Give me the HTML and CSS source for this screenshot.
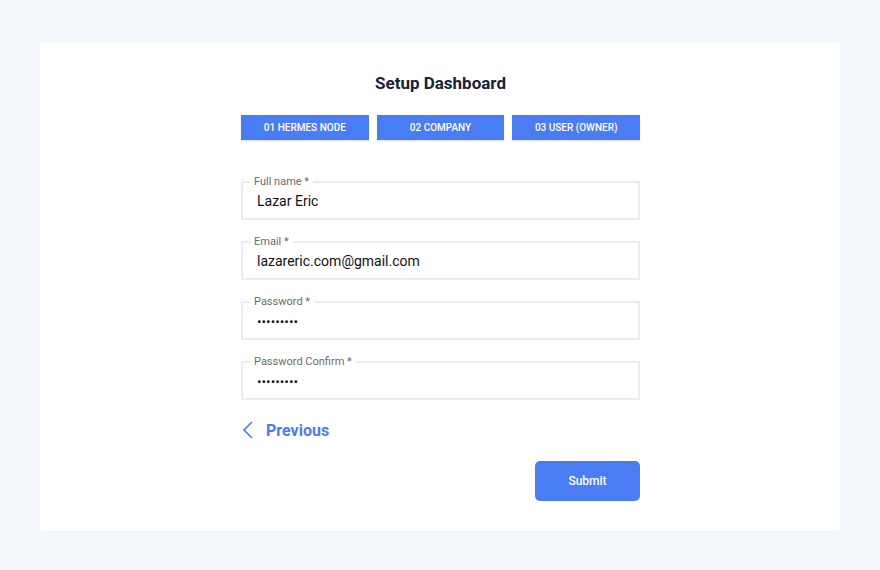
FILE: index.html
```html
<!DOCTYPE html>
<html>
<head>
<meta charset="utf-8">
<link rel="stylesheet" href="styles.css">
</head>
<body>
<div class="page">
  <div class="card">
    <div class="form">
      <h1 class="title">Setup Dashboard</h1>
      <div class="steps">
        <div class="step">01 HERMES NODE</div>
        <div class="step">02 COMPANY</div>
        <div class="step">03 USER (OWNER)</div>
      </div>
      <fieldset class="field">
        <legend>Full name *</legend>
        <input class="value" type="text" value="Lazar Eric">
      </fieldset>
      <fieldset class="field">
        <legend>Email *</legend>
        <input class="value" type="text" value="lazareric.com@gmail.com">
      </fieldset>
      <fieldset class="field">
        <legend>Password *</legend>
        <input class="value" type="password" value="123456789">
      </fieldset>
      <fieldset class="field">
        <legend>Password Confirm *</legend>
        <input class="value" type="password" value="123456789">
      </fieldset>
      <a class="prev" href="#">
        <svg width="12" height="18" viewBox="0 0 12 18"><polyline points="10,1 2,9 10,17" fill="none" stroke="#4a7cf3" stroke-width="1.6"/></svg>
        <span>Previous</span>
      </a>
      <div class="actions">
        <button class="submit">Submit</button>
      </div>
    </div>
  </div>
</div>
</body>
</html>
```
FILE: styles.css
```css
* { box-sizing: border-box; }
html, body { margin: 0; padding: 0; }
body {
  background: #f3f6fb;
  font-family: Roboto, "Liberation Sans", sans-serif;
  width: 880px;
  height: 570px;
  overflow: hidden;
}
.page { padding: 43px 40px 0; }
.card {
  background: #fff;
  height: 488px;
  border-radius: 2px;
  display: flex;
  justify-content: center;
}
.form {
  width: 399px;
  padding-top: 30px;
  margin-left: 1px;
}
.title {
  margin: 0;
  text-align: center;
  font-size: 17px;
  line-height: 20px;
  font-weight: 700;
  color: #17223a;
}
.steps {
  display: flex;
  gap: 8px;
  margin-top: 22px;
  margin-bottom: 35px;
}
.step {
  flex: 1;
  height: 25px;
  background: #4a7cf3;
  color: #fff;
  font-size: 10px;
  font-weight: 500;
  display: flex;
  align-items: center;
  justify-content: center;
  box-shadow: 0 1px 1px rgba(0,0,0,0.12);
}
.field {
  margin: 0 0 15px;
  border: 2px solid #ececec;
  padding: 3px 14px 7px;
  height: 45px;
}
.field legend {
  font-size: 11px;
  line-height: 13px;
  color: #6b6b6b;
  padding: 0 4px;
  margin-left: -7px;
}
.value {
  border: none;
  outline: none;
  padding: 0;
  margin: 0;
  width: 100%;
  font-family: Roboto, "Liberation Sans", sans-serif;
  font-size: 14px;
  line-height: 18px;
  color: #111;
  background: transparent;
}
.value[type="password"] { font-size: 13.5px; }
.prev {
  display: flex;
  align-items: center;
  gap: 12px;
  text-decoration: none;
  color: #4a7cf3;
  font-weight: 700;
  font-size: 16px;
  margin-top: 20px;
  margin-left: 1px;
  height: 20px;
}
.actions {
  display: flex;
  justify-content: flex-end;
  margin-top: 21px;
}
.submit {
  width: 105px;
  height: 40px;
  border: none;
  border-radius: 5px;
  background: #4a7cf3;
  color: #fff;
  font-family: Roboto, "Liberation Sans", sans-serif;
  font-weight: 500;
  font-size: 12px;
}
```
